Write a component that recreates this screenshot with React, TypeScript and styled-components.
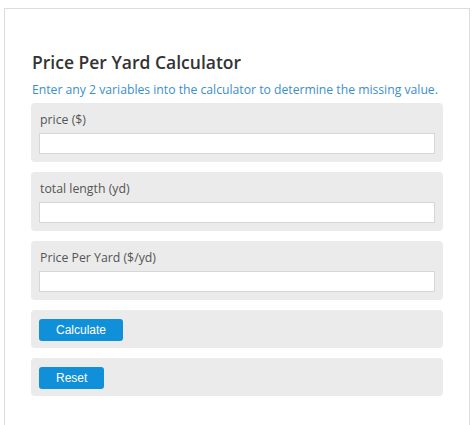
import React from "react";
import styled, { createGlobalStyle } from "styled-components";

const Global = createGlobalStyle`
  html, body { margin: 0; padding: 0; background: #fff; }
  body { font-family: "Open Sans", "DejaVu Sans", sans-serif; }
`;

const Card = styled.div`
  margin: 8px 0 0 4px;
  width: 466px;
  min-height: 430px;
  box-sizing: border-box;
  border: 1px solid #dcdcdc;
  border-bottom: none;
  padding: 40px 26px 30px 26px;
`;

const Title = styled.h1`
  margin: 0 0 0 1px;
  font-family: "Open Sans", sans-serif;
  font-weight: 600;
  font-size: 17.5px;
  line-height: 26px;
  color: #333;
`;

const Subtitle = styled.p`
  margin: 6px 0 4px 1px;
  font-family: "Open Sans", sans-serif;
  font-size: 12.2px;
  line-height: 18px;
  color: #3a8fcc;
  white-space: nowrap;
`;

const Stack = styled.div`
  display: flex;
  flex-direction: column;
  gap: 10px;
`;

const Box = styled.div<{ $button?: boolean }>`
  background: #ebebeb;
  border-radius: 4px;
  padding: ${(p) => (p.$button ? "9px 8px 7px" : "8px")};
  display: flex;
  flex-direction: column;
  align-items: flex-start;
`;

const Label = styled.label`
  font-family: "Open Sans", sans-serif;
  font-size: 12.3px;
  line-height: 18px;
  color: #555;
  margin: 0 0 4px 1px;
`;

const Input = styled.input`
  box-sizing: border-box;
  width: 100%;
  height: 21px;
  border: 1px solid #d6d6d6;
  background: #fff;
  margin: 0;
  padding: 0 4px;
  outline: none;
`;

const Button = styled.button`
  font-family: "Liberation Sans", Arial, sans-serif;
  font-size: 12px;
  color: #fff;
  background: #0f90d8;
  border: none;
  border-radius: 3px;
  height: 22px;
  padding: 0 17px;
  cursor: pointer;
`;

const fields = ["price ($)", "total length (yd)", "Price Per Yard ($/yd)"];

export default function App() {
  return (
    <>
      <Global />
      <Card>
        <Title>Price Per Yard Calculator</Title>
        <Subtitle>Enter any 2 variables into the calculator to determine the missing value.</Subtitle>
        <Stack>
          {fields.map((f) => (
            <Box key={f}>
              <Label>{f}</Label>
              <Input type="text" />
            </Box>
          ))}
          <Box $button>
            <Button>Calculate</Button>
          </Box>
          <Box $button>
            <Button>Reset</Button>
          </Box>
        </Stack>
      </Card>
    </>
  );
}
